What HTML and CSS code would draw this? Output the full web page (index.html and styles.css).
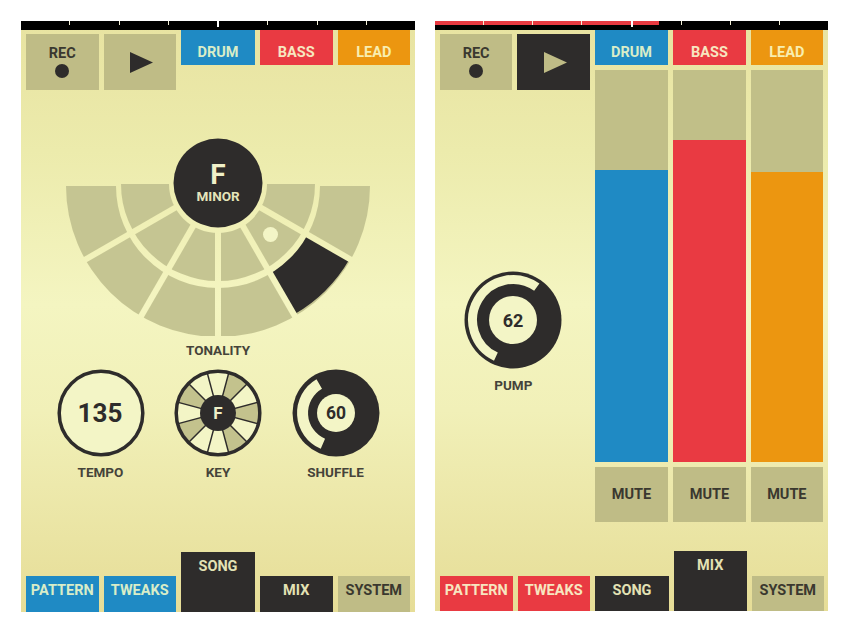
FILE: index.html
```html
<!DOCTYPE html>
<html lang="en">
<head>
<meta charset="utf-8">
<title>Groove synth</title>
<link rel="stylesheet" href="styles.css">
</head>
<body>
<main class="page">

  <section class="panel panel-song">
    <div class="timeline">
      <i class="tick"></i><i class="tick"></i><i class="tick"></i><i class="tick tick-major"></i><i class="tick"></i><i class="tick"></i><i class="tick"></i>
    </div>
    <div class="row">
      <button class="btn btn-pad rec">REC<span class="dot"></span></button>
      <button class="btn btn-pad play"><svg class="tri" viewBox="0 0 23 21"><path d="M0 0 23 10.5 0 21Z"/></svg></button>
      <button class="btn head blue">DRUM</button>
      <button class="btn head red">BASS</button>
      <button class="btn head orange">LEAD</button>
    </div>
    <div class="wheel-wrap">
      <svg class="wheel" viewBox="0 0 310 198" width="310" height="198">
        <defs>
          <mask id="wheel-cuts" maskUnits="userSpaceOnUse" x="0" y="0" width="310" height="198">
            <path class="m-on" d="M3 48A152 151 0 0 0 307 48L257 48A102 102 0 0 1 53 48Z"/>
            <path class="m-on" d="M58 46A97 97 0 0 0 252 46L204 46A49 49 0 0 1 106 46Z"/>
            <g class="m-off">
              <line x1="155" y1="45" x2="293.6" y2="125"/>
              <line x1="155" y1="45" x2="16.4" y2="125"/>
              <line x1="155" y1="45" x2="235" y2="183.6"/>
              <line x1="155" y1="45" x2="75" y2="183.6"/>
              <line x1="155" y1="45" x2="155" y2="205"/>
            </g>
          </mask>
        </defs>
        <g mask="url(#wheel-cuts)">
          <rect class="seg" width="310" height="198"/>
          <path class="ink" d="M243.3 96 286.6 121A152 151 0 0 1 231 176.6L206 133.3A102 102 0 0 0 243.3 96Z"/>
        </g>
        <circle class="pale" cx="207.5" cy="96.5" r="7.5"/>
        <circle class="ink" cx="155" cy="45" r="44.5"/>
        <text class="t-note" x="155" y="45.5">F</text>
        <text class="t-mode" x="155" y="63">MINOR</text>
      </svg>
      <div class="label label-tonality">TONALITY</div>
    </div>
    <div class="knobs">
      <div class="knob">
        <svg viewBox="0 0 88 88" width="88" height="88">
          <circle class="ring" cx="44" cy="44" r="41.8"/>
          <text class="t-tempo" x="43" y="52.5">135</text>
        </svg>
        <div class="label">TEMPO</div>
      </div>
      <div class="knob">
        <svg viewBox="0 0 88 88" width="88" height="88">
          <circle class="pale" cx="44" cy="44" r="42"/>
          <g class="shade">
            <circle cx="44" cy="44" r="30" pathLength="360" transform="rotate(-75 44 44)"/>
            <circle cx="44" cy="44" r="30" pathLength="360" transform="rotate(-15 44 44)"/>
            <circle cx="44" cy="44" r="30" pathLength="360" transform="rotate(45 44 44)"/>
            <circle cx="44" cy="44" r="30" pathLength="360" transform="rotate(135 44 44)"/>
            <circle cx="44" cy="44" r="30" pathLength="360" transform="rotate(195 44 44)"/>
          </g>
          <g class="spokes">
            <line x1="54.9" y1="3.4" x2="33.1" y2="84.6"/>
            <line x1="73.7" y1="14.3" x2="14.3" y2="73.7"/>
            <line x1="84.6" y1="33.1" x2="3.4" y2="54.9"/>
            <line x1="84.6" y1="54.9" x2="3.4" y2="33.1"/>
            <line x1="73.7" y1="73.7" x2="14.3" y2="14.3"/>
            <line x1="54.9" y1="84.6" x2="33.1" y2="3.4"/>
          </g>
          <circle class="ring-clear" cx="44" cy="44" r="41.8"/>
          <circle class="ink" cx="44" cy="44" r="18"/>
          <text class="t-key" x="44" y="50">F</text>
        </svg>
        <div class="label">KEY</div>
      </div>
      <div class="knob">
        <svg viewBox="0 0 88 88" width="88" height="88">
          <circle class="ink" cx="44" cy="44" r="43.5"/>
          <path class="arc arc-shuffle" d="M30.9 74.8A33.5 33.5 0 0 1 27.25 15"/>
          <circle class="pale" cx="44" cy="44" r="19"/>
          <text class="t-small" x="44" y="50">60</text>
        </svg>
        <div class="label">SHUFFLE</div>
      </div>
    </div>
    <nav class="row tabs">
      <button class="btn tab blue">PATTERN</button>
      <button class="btn tab blue">TWEAKS</button>
      <button class="btn tab tab-active dark">SONG</button>
      <button class="btn tab dark">MIX</button>
      <button class="btn tab muted">SYSTEM</button>
    </nav>
  </section>

  <section class="panel panel-mix">
    <div class="timeline">
      <span class="progress"></span>
      <i class="tick"></i><i class="tick"></i><i class="tick"></i><i class="tick tick-major"></i><i class="tick"></i><i class="tick"></i><i class="tick"></i>
    </div>
    <div class="mix-body">
      <div class="side">
        <div class="side-buttons">
          <button class="btn btn-pad rec">REC<span class="dot"></span></button>
          <button class="btn btn-pad play playing"><svg class="tri" viewBox="0 0 23 21"><path d="M0 0 23 10.5 0 21Z"/></svg></button>
        </div>
        <div class="pump">
          <svg viewBox="0 0 98 98" width="98" height="98">
            <circle class="ink" cx="49" cy="49" r="48.5"/>
            <path class="arc arc-pump" d="M31.9 85.7A40.5 40.5 0 1 1 72.8 16.2"/>
            <circle class="pale" cx="49" cy="49" r="24"/>
            <text class="t-small t-pump" x="49" y="55.5">62</text>
          </svg>
          <div class="label">PUMP</div>
        </div>
      </div>
      <div class="channel">
        <button class="btn head blue">DRUM</button>
        <div class="track"><div class="level blue" style="height:292px"></div></div>
        <button class="btn mute">MUTE</button>
      </div>
      <div class="channel">
        <button class="btn head red">BASS</button>
        <div class="track"><div class="level red" style="height:322px"></div></div>
        <button class="btn mute">MUTE</button>
      </div>
      <div class="channel">
        <button class="btn head orange">LEAD</button>
        <div class="track"><div class="level orange" style="height:290px"></div></div>
        <button class="btn mute">MUTE</button>
      </div>
    </div>
    <nav class="row tabs">
      <button class="btn tab red">PATTERN</button>
      <button class="btn tab red">TWEAKS</button>
      <button class="btn tab dark">SONG</button>
      <button class="btn tab tab-active dark">MIX</button>
      <button class="btn tab muted">SYSTEM</button>
    </nav>
  </section>

</main>
</body>
</html>
```
FILE: styles.css
```css
* { box-sizing: border-box; }

html, body {
  margin: 0;
  background: #fff;
}

.page {
  display: flex;
  gap: 20px;
  padding: 21px 0 0 21px;
  font-family: Roboto, "Liberation Sans", sans-serif;
  font-weight: 700;
}

.panel {
  position: relative;
  display: flex;
  flex-direction: column;
  width: 394px;
  height: 591px;
  background: linear-gradient(180deg, #e8e3a1 0%, #ecebac 22%, #f4f5c1 48%, #f1f0b8 66%, #e6dd97 100%);
}

.panel-mix {
  width: 393px;
  height: 590px;
}

/* timeline */
.timeline {
  position: relative;
  flex: none;
  display: flex;
  justify-content: space-evenly;
  align-items: flex-start;
  height: 9px;
  background: #000;
}

.tick {
  position: relative;
  width: 1px;
  height: 4px;
  background: #f4f1d8;
}

.tick-major {
  width: 2px;
  height: 6px;
  background: #fff;
}

.progress {
  position: absolute;
  left: 0;
  top: 0;
  width: 224px;
  height: 4px;
  background: #e93a41;
}

/* shared buttons */
.row {
  display: grid;
  grid-template-columns: 72.5px 72.5px 74px 72.5px 72.5px;
  column-gap: 5px;
  padding: 0 5px;
  align-items: start;
}

.btn {
  display: flex;
  justify-content: center;
  align-items: flex-start;
  width: 100%;
  margin: 0;
  padding: 0;
  border: 0;
  border-radius: 0;
  font: inherit;
  font-size: 14.5px;
  line-height: 16px;
  color: #3a382f;
}

.blue { background: #1f8ac4; color: #d9edc8; }
.red { background: #e93a42; color: #f7e6c0; }
.orange { background: #ec9610; color: #f8eeb0; }
.dark { background: #2e2c2b; color: #e3e2b4; }
.muted { background: #bfbc86; color: #3a382f; }

.head {
  height: 35px;
  padding-top: 15px;
}

.btn-pad {
  height: 56px;
  margin-top: 4px;
  background: #bfbc86;
}

.rec {
  flex-direction: column;
  align-items: center;
  justify-content: flex-start;
  padding-top: 12px;
}

.dot {
  display: block;
  width: 14px;
  height: 14px;
  margin-top: 2px;
  border-radius: 50%;
  background: #2e2c2b;
}

.play {
  align-items: center;
}

.tri {
  display: block;
  width: 23px;
  height: 21px;
  margin-left: 4px;
  fill: #2e2c2b;
}

.playing {
  background: #2e2c2b;
}

.playing .tri {
  fill: #bfbc86;
}

/* wheel */
.wheel-wrap {
  display: flex;
  flex-direction: column;
  align-items: center;
  margin-top: 48px;
}

.wheel {
  display: block;
}

.m-on { fill: #fff; }
.m-off line { stroke: #000; stroke-width: 6; }

.seg { fill: #c5c592; }
.ink { fill: #2e2c2b; }
.pale { fill: #f3f5c6; }

svg text {
  font-family: Roboto, "Liberation Sans", sans-serif;
  font-weight: 700;
  text-anchor: middle;
}

.t-note { font-size: 28px; fill: #f0f0c8; }
.t-mode { font-size: 13.5px; fill: #e5e5ba; }
.t-tempo { font-size: 26px; fill: #2e2c2b; }
.t-key { font-size: 17px; fill: #f0f0c8; }
.t-small { font-size: 17.5px; fill: #2e2c2b; }
.t-pump { font-size: 18px; }

.label {
  font-size: 13.5px;
  line-height: 16px;
  text-align: center;
  color: #45433a;
}

.label-tonality {
  margin-top: 6px;
}

/* knobs */
.knobs {
  display: flex;
  justify-content: center;
  margin-top: 11px;
}

.knob {
  display: flex;
  flex-direction: column;
  align-items: center;
  width: 117.5px;
}

.knob svg {
  display: block;
  margin-bottom: 7px;
}

.ring {
  fill: #f3f5c6;
  stroke: #2e2c2b;
  stroke-width: 3.5;
}

.ring-clear {
  fill: none;
  stroke: #2e2c2b;
  stroke-width: 3.5;
}

.shade circle {
  fill: none;
  stroke: #c3c28d;
  stroke-width: 24;
  stroke-dasharray: 30 330;
}

.spokes line {
  stroke: #2e2c2b;
  stroke-width: 1.5;
}

.arc {
  fill: none;
  stroke: #f3f5c6;
}

.arc-shuffle { stroke-width: 11; }
.arc-pump { stroke-width: 9; }

/* tabs */
.tabs {
  margin-top: auto;
  align-items: end;
}

.tab {
  height: 36px;
  padding-top: 7px;
}

.tab-active {
  height: 60px;
}

.panel-mix .tab { height: 35px; }
.panel-mix .tab-active { height: 60px; }

/* mix panel */
.mix-body {
  display: flex;
  gap: 5px;
  padding: 0 5px;
}

.side {
  width: 150px;
}

.side-buttons {
  display: flex;
  gap: 5px;
}

.pump {
  display: flex;
  flex-direction: column;
  align-items: center;
  margin: 181px 3px 0 0;
}

.pump svg {
  display: block;
  margin-bottom: 8px;
}

.channel {
  display: flex;
  flex-direction: column;
  width: 72.5px;
}

.channel:nth-child(2) {
  width: 74px;
}

.track {
  display: flex;
  align-items: flex-end;
  height: 392px;
  margin-top: 5px;
  background: #c1bf88;
}

.level {
  width: 100%;
}

.mute {
  align-items: center;
  height: 55px;
  margin-top: 5px;
  background: #bfbc86;
}
```
